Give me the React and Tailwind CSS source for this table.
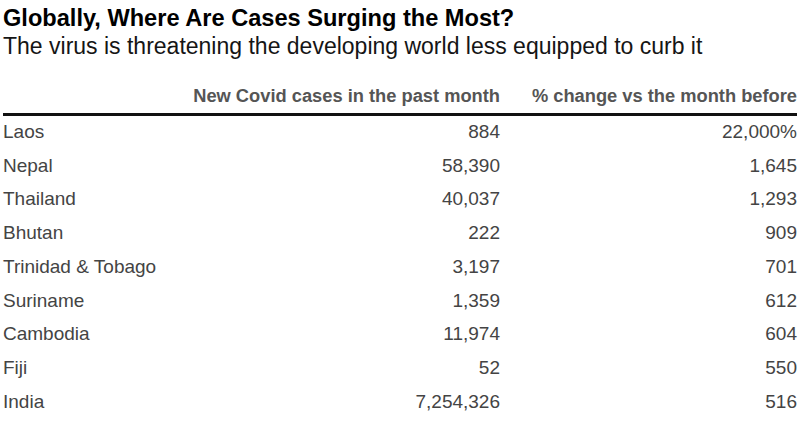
import React from 'react';

const rows = [
  ['Laos', '884', '22,000%'],
  ['Nepal', '58,390', '1,645'],
  ['Thailand', '40,037', '1,293'],
  ['Bhutan', '222', '909'],
  ['Trinidad & Tobago', '3,197', '701'],
  ['Suriname', '1,359', '612'],
  ['Cambodia', '11,974', '604'],
  ['Fiji', '52', '550'],
  ['India', '7,254,326', '516'],
];

export default function App() {
  return (
    <div className="w-[800px] h-[426px] overflow-hidden bg-white px-[3px] pt-[4px] font-['Liberation_Sans',Arial,sans-serif]">
      <h1 className="text-[23.6px] leading-[28px] font-bold text-black">
        Globally, Where Are Cases Surging the Most?
      </h1>
      <p className="text-[23px] leading-[28px] text-[#151515]">
        The virus is threatening the developing world less equipped to curb it
      </p>

      {/* column headers */}
      <div className="mt-[25px] grid grid-cols-[1fr_310px_297px] text-[18.3px] font-bold text-[#555] leading-[22px] pb-[6px] border-b-[3px] border-[#111]">
        <div />
        <div className="text-right whitespace-nowrap">New Covid cases in the past month</div>
        <div className="text-right whitespace-nowrap">% change vs the month before</div>
      </div>

      <div className="-mt-[1px]">
        {rows.map(([country, cases, change]) => (
          <div
            key={country}
            className="grid grid-cols-[1fr_310px_297px] leading-[33.7px] text-[19px] text-[#444]"
          >
            <div className="whitespace-nowrap">{country}</div>
            <div className="text-right">{cases}</div>
            <div className="text-right">{change}</div>
          </div>
        ))}
      </div>
    </div>
  );
}
